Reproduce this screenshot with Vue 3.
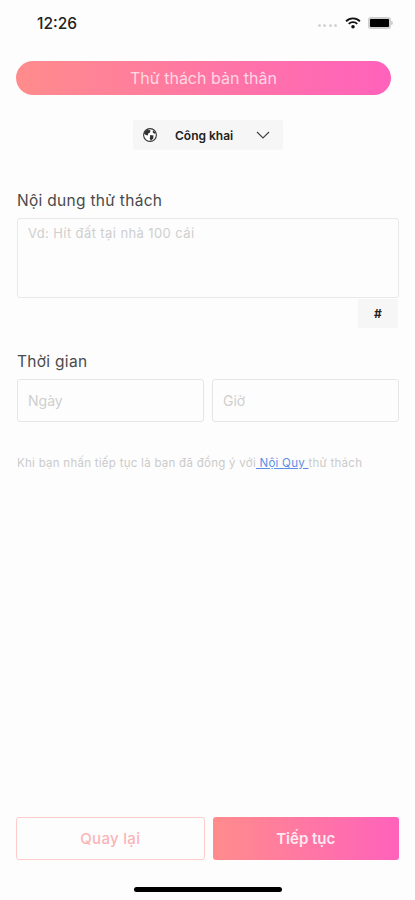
<script setup>
import { ref } from 'vue';

const content = ref('');
const day = ref('');
const hour = ref('');
</script>

<template>
  <div class="screen">
    <!-- Status bar -->
    <div class="status-bar">
      <span class="clock">12:26</span>
      <div class="status-icons">
        <span class="signal"><i></i><i></i><i></i><i></i></span>
        <svg class="wifi" width="16" height="12" viewBox="0 0 17 13">
          <path d="M1 4.6a10.6 10.6 0 0 1 15 0" fill="none" stroke="#111" stroke-width="2" />
          <path d="M3.9 7.5a6.5 6.5 0 0 1 9.2 0" fill="none" stroke="#111" stroke-width="2" />
          <circle cx="8.5" cy="10.6" r="1.9" fill="#111" />
        </svg>
        <span class="battery"><i></i></span>
      </div>
    </div>

    <div class="title-pill">Thử thách bản thân</div>

    <div class="privacy-row">
      <button class="privacy">
        <svg width="14" height="14" viewBox="0 0 14 14">
          <circle cx="7" cy="7" r="6.4" fill="#fff" stroke="#333" stroke-width="1.1" />
          <path d="M4.4 1.4 7.6 2.6 7 4.6 5.2 5.4 4.8 7.4 2.8 7 .9 5.6A6.4 6.4 0 0 1 4.4 1.4Z" fill="#333" />
          <path d="M7.2 7 10.6 7.6 10.2 10.4 8 12.8 6.8 10.8Z" fill="#333" />
          <path d="M10 2.2 13 5 11.2 5.8 9.6 4.2Z" fill="#333" />
        </svg>
        <span class="privacy-text">Công khai</span>
        <svg width="14" height="8" viewBox="0 0 14 8">
          <path d="M1 1 7 7 13 1" fill="none" stroke="#444" stroke-width="1.2" />
        </svg>
      </button>
    </div>

    <div class="form">
      <label class="label">Nội dung thử thách</label>
      <textarea v-model="content" class="textarea" placeholder="Vd: Hít đất tại nhà 100 cái"></textarea>
      <div class="hash-row">
        <button class="hash">#</button>
      </div>

      <label class="label time-label">Thời gian</label>
      <div class="time-row">
        <input v-model="day" class="field" placeholder="Ngày" />
        <input v-model="hour" class="field" placeholder="Giờ" />
      </div>

      <p class="terms">Khi bạn nhấn tiếp tục là bạn đã đồng ý với<a class="rules"> Nội Quy </a>thử thách</p>
    </div>

    <div class="actions">
      <button class="btn back">Quay lại</button>
      <button class="btn next">Tiếp tục</button>
    </div>

    <div class="home-wrap">
      <div class="home-bar"></div>
    </div>
  </div>
</template>

<style scoped>
.screen {
  width: 415px;
  height: 900px;
  display: flex;
  flex-direction: column;
  background: #fdfdfd;
  font-family: Inter, "Noto Sans", sans-serif;
  overflow: hidden;
}
.status-bar {
  height: 46px;
  padding: 0 22px 0 37px;
  display: flex;
  align-items: center;
  justify-content: space-between;
}
.clock {
  font-size: 15.5px;
  font-weight: 500;
  color: #222;
}
.status-icons {
  display: flex;
  align-items: center;
  gap: 7px;
}
.signal {
  display: flex;
  gap: 2.5px;
  margin-top: 4px;
  margin-right: 1px;
}
.signal i {
  width: 3px;
  height: 3px;
  border-radius: 50%;
  background: #d4d4d4;
}
.battery {
  position: relative;
  width: 23px;
  height: 12px;
  padding: 2px;
  margin-right: 2px;
  box-sizing: border-box;
  border-radius: 3px;
  background: #cfcfcf;
  display: flex;
}
.battery::after {
  content: '';
  position: absolute;
  left: 23px;
  top: 4px;
  width: 2px;
  height: 4px;
  border-radius: 0 2px 2px 0;
  background: #cfcfcf;
}
.battery i {
  flex: 1;
  background: #000;
  border-radius: 1px;
}
.title-pill {
  margin: 15px 24px 0 16px;
  height: 34px;
  border-radius: 17px;
  background: linear-gradient(90deg, #ff8c8c, #ff62bb);
  color: rgba(255, 255, 255, 0.72);
  font-size: 16px;
  display: flex;
  align-items: center;
  justify-content: center;
}
.privacy-row {
  margin-top: 25px;
  padding-left: 1px;
  display: flex;
  justify-content: center;
}
.privacy {
  width: 150px;
  height: 30px;
  padding: 0 13px 0 10px;
  border: none;
  border-radius: 3px;
  background: #f6f6f6;
  display: flex;
  align-items: center;
  font-family: inherit;
}
.privacy-text {
  flex: 1;
  margin-left: 18px;
  text-align: left;
  font-size: 12px;
  font-weight: 600;
  color: #222;
}
.form {
  flex: 1;
  padding: 41px 16px 0 17px;
}
.label {
  display: block;
  font-size: 15.5px;
  line-height: 20px;
  letter-spacing: 0.3px;
  color: #4a4a4a;
}
.textarea {
  display: block;
  box-sizing: border-box;
  width: 382px;
  height: 80px;
  margin-top: 7px;
  padding: 6px 10px;
  border: 1px solid #e9e9e9;
  border-radius: 3px;
  background: #fdfdfd;
  resize: none;
  outline: none;
  font-family: inherit;
  font-size: 13px;
  letter-spacing: 0.4px;
}
.textarea::placeholder,
.field::placeholder {
  color: #cfcfcf;
}
.hash-row {
  display: flex;
  justify-content: flex-end;
  margin-top: 1px;
  padding-right: 1px;
}
.hash {
  width: 40px;
  height: 29px;
  border: none;
  background: #f6f6f6;
  font-family: inherit;
  font-size: 12px;
  font-weight: 700;
  color: #222;
}
.time-label {
  margin-top: 24px;
}
.time-row {
  display: flex;
  gap: 8px;
  margin-top: 7px;
}
.field {
  flex: 1;
  min-width: 0;
  box-sizing: border-box;
  height: 43px;
  padding: 0 10px;
  border: 1px solid #e6e6e6;
  border-radius: 3px;
  background: #fdfdfd;
  outline: none;
  font-family: inherit;
  font-size: 14px;
}
.terms {
  margin: 34px 0 0;
  font-size: 11.5px;
  line-height: 14px;
  letter-spacing: 0.27px;
  color: #cbcbcb;
  white-space: nowrap;
}
.rules {
  color: #5b8fe6;
  text-decoration: underline;
}
.actions {
  display: flex;
  gap: 8px;
  padding: 0 16px;
}
.btn {
  flex: 1;
  height: 43px;
  box-sizing: border-box;
  border-radius: 3px;
  font-family: inherit;
  font-size: 15px;
}
.back {
  border: 1.5px solid #ffcccc;
  background: #fdfdfd;
  color: #f9b4b8;
  font-weight: 500;
  letter-spacing: 0.3px;
}
.next {
  border: none;
  background: linear-gradient(90deg, #ff8c8c, #ff62bb);
  color: #ffe9f2;
  font-weight: 600;
}
.home-wrap {
  height: 40px;
  display: flex;
  justify-content: center;
  padding-top: 27px;
  box-sizing: border-box;
}
.home-bar {
  width: 148px;
  height: 5px;
  border-radius: 3px;
  background: #000;
}
</style>
